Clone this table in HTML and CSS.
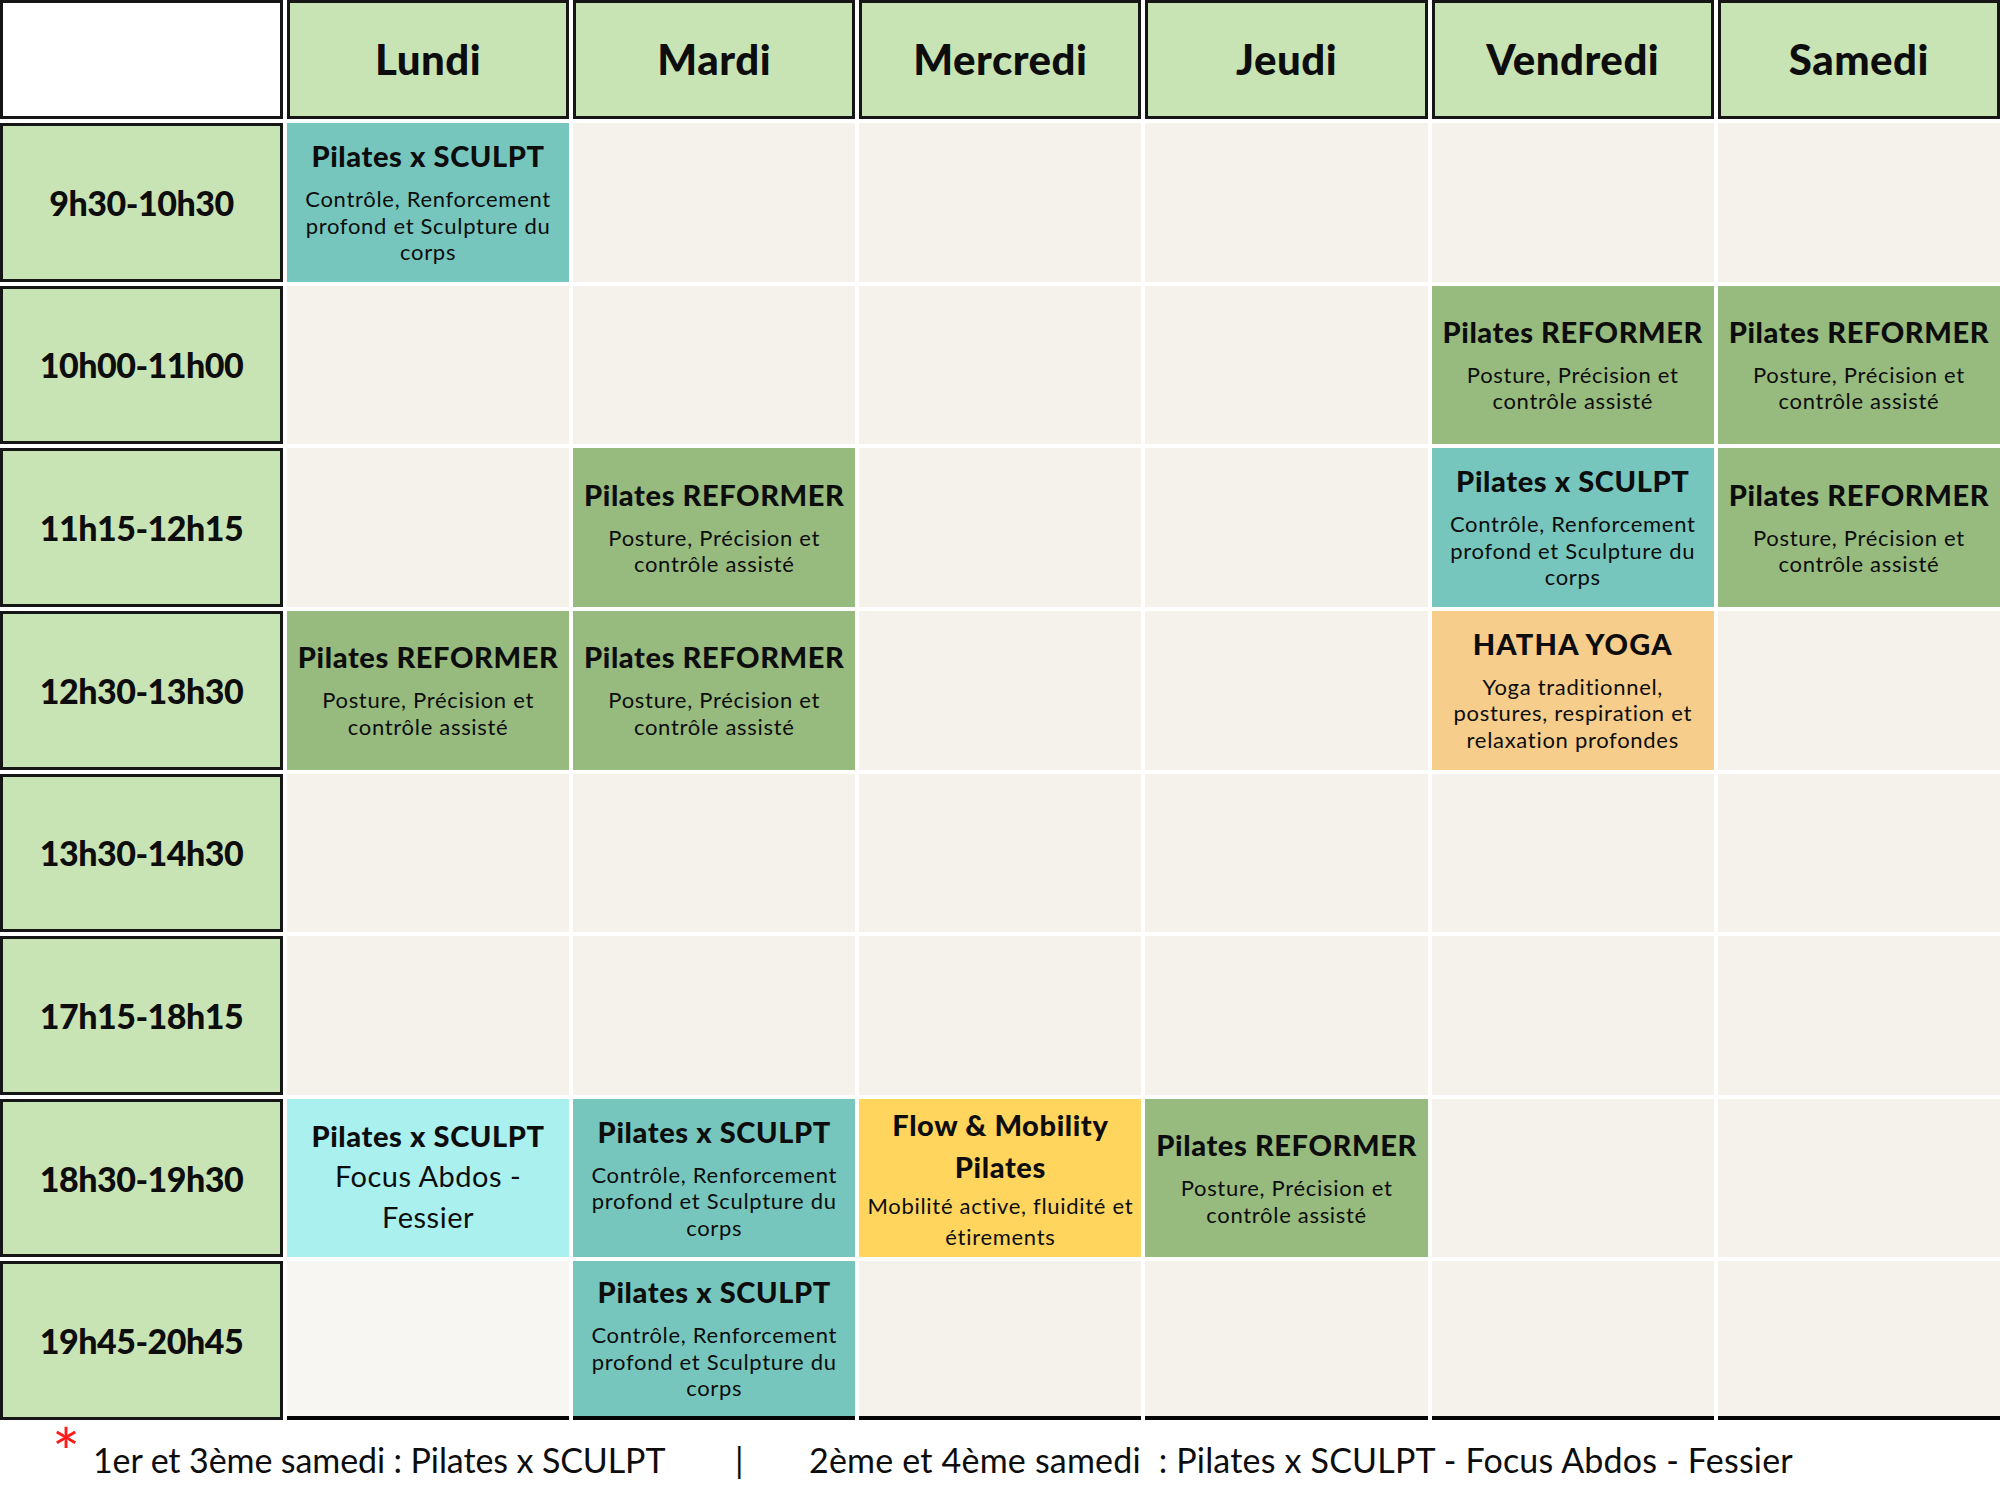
FILE: index.html
```html
<!DOCTYPE html>
<html lang="fr">
<head>
<meta charset="utf-8">
<title>Planning des cours</title>
<link rel="stylesheet" href="styles.css">
</head>
<body>
<div class="schedule">
  <div class="corner"></div>
  <div class="day">Lundi</div>
  <div class="day">Mardi</div>
  <div class="day">Mercredi</div>
  <div class="day">Jeudi</div>
  <div class="day">Vendredi</div>
  <div class="day">Samedi</div>

  <!-- 9h30 -->
  <div class="time">9h30-10h30</div>
  <div class="cell sculpt"><div class="title">Pilates x SCULPT</div><div class="sub">Contrôle, Renforcement<br>profond et Sculpture du<br>corps</div></div>
  <div class="cell"></div>
  <div class="cell"></div>
  <div class="cell"></div>
  <div class="cell"></div>
  <div class="cell"></div>

  <!-- 10h00 -->
  <div class="time">10h00-11h00</div>
  <div class="cell"></div>
  <div class="cell"></div>
  <div class="cell"></div>
  <div class="cell"></div>
  <div class="cell reformer"><div class="title">Pilates REFORMER</div><div class="sub">Posture, Précision et<br>contrôle assisté</div></div>
  <div class="cell reformer"><div class="title">Pilates REFORMER</div><div class="sub">Posture, Précision et<br>contrôle assisté</div></div>

  <!-- 11h15 -->
  <div class="time">11h15-12h15</div>
  <div class="cell"></div>
  <div class="cell reformer"><div class="title">Pilates REFORMER</div><div class="sub">Posture, Précision et<br>contrôle assisté</div></div>
  <div class="cell"></div>
  <div class="cell"></div>
  <div class="cell sculpt"><div class="title">Pilates x SCULPT</div><div class="sub">Contrôle, Renforcement<br>profond et Sculpture du<br>corps</div></div>
  <div class="cell reformer"><div class="title">Pilates REFORMER</div><div class="sub">Posture, Précision et<br>contrôle assisté</div></div>

  <!-- 12h30 -->
  <div class="time">12h30-13h30</div>
  <div class="cell reformer"><div class="title">Pilates REFORMER</div><div class="sub">Posture, Précision et<br>contrôle assisté</div></div>
  <div class="cell reformer"><div class="title">Pilates REFORMER</div><div class="sub">Posture, Précision et<br>contrôle assisté</div></div>
  <div class="cell"></div>
  <div class="cell"></div>
  <div class="cell yoga"><div class="title wide">HATHA YOGA</div><div class="sub">Yoga traditionnel,<br>postures, respiration et<br>relaxation profondes</div></div>
  <div class="cell"></div>

  <!-- 13h30 -->
  <div class="time">13h30-14h30</div>
  <div class="cell"></div>
  <div class="cell"></div>
  <div class="cell"></div>
  <div class="cell"></div>
  <div class="cell"></div>
  <div class="cell"></div>

  <!-- 17h15 -->
  <div class="time">17h15-18h15</div>
  <div class="cell"></div>
  <div class="cell"></div>
  <div class="cell"></div>
  <div class="cell"></div>
  <div class="cell"></div>
  <div class="cell"></div>

  <!-- 18h30 -->
  <div class="time">18h30-19h30</div>
  <div class="cell focus"><div class="title">Pilates x SCULPT</div><div class="sub sub-large">Focus Abdos -<br>Fessier</div></div>
  <div class="cell sculpt"><div class="title">Pilates x SCULPT</div><div class="sub">Contrôle, Renforcement<br>profond et Sculpture du<br>corps</div></div>
  <div class="cell flow"><div class="title title-tall">Flow &amp; Mobility<br>Pilates</div><div class="sub sub-loose">Mobilité active, fluidité et<br>étirements</div></div>
  <div class="cell reformer"><div class="title">Pilates REFORMER</div><div class="sub">Posture, Précision et<br>contrôle assisté</div></div>
  <div class="cell"></div>
  <div class="cell"></div>

  <!-- 19h45 -->
  <div class="time">19h45-20h45</div>
  <div class="cell last light"></div>
  <div class="cell last sculpt"><div class="title">Pilates x SCULPT</div><div class="sub">Contrôle, Renforcement<br>profond et Sculpture du<br>corps</div></div>
  <div class="cell last"></div>
  <div class="cell last"></div>
  <div class="cell last"></div>
  <div class="cell last"></div>
</div>

<div class="footer">
  <span class="star">*</span>
  <span class="note note-first">1er et 3ème samedi : Pilates x SCULPT</span>
  <span class="note sep">|</span>
  <span class="note note-second">2ème et 4ème samedi&nbsp; : Pilates x SCULPT - Focus Abdos - Fessier</span>
</div>
</body>
</html>
```

FILE: styles.css
```css
* { box-sizing: border-box; }

html, body {
  margin: 0;
  padding: 0;
  background: #ffffff;
}

body {
  width: 2000px;
  height: 1500px;
  overflow: hidden;
  font-family: "Lato", "Noto Sans", sans-serif;
  color: #0d0d0d;
}

.schedule {
  display: grid;
  width: 2000px;
  height: 1420px;
  grid-template-columns: 283px repeat(6, 1fr);
  grid-template-rows: 119px repeat(8, 1fr);
  column-gap: 4px;
  row-gap: 4px;
}

.corner {
  background: #ffffff;
  border: 3px solid #161616;
}

.day {
  background: #c8e4b4;
  border: 3px solid #161616;
  display: flex;
  align-items: center;
  justify-content: center;
  font-weight: 900;
  font-size: 42px;
  letter-spacing: 0.5px;
  padding-bottom: 2px;
}

.time {
  background: #c8e4b4;
  border: 3px solid #161616;
  display: flex;
  align-items: center;
  justify-content: center;
  font-weight: 900;
  font-size: 34px;
  letter-spacing: -0.5px;
}

.cell {
  background: #f4f2eb;
  display: flex;
  flex-direction: column;
  align-items: center;
  justify-content: center;
  text-align: center;
  white-space: nowrap;
}

.cell.light { background: #f7f6f2; }
.cell.last { border-bottom: 4px solid #050505; }

.sculpt { background: #76c6be; }
.reformer { background: #97bb7e; }
.focus { background: #aaf0ee; }
.yoga { background: #f6cd8a; }
.flow { background: #ffd55e; }

.title {
  font-weight: 900;
  font-size: 29px;
  line-height: 34px;
  letter-spacing: 0.6px;
}

.title.wide { letter-spacing: 1.2px; }

.title.title-tall { line-height: 42px; }

.sub {
  margin-top: 13px;
  font-size: 22px;
  line-height: 26.5px;
  font-weight: 400;
  letter-spacing: 0.7px;
}

.sub.sub-large {
  margin-top: 2px;
  font-size: 29px;
  line-height: 41.5px;
  letter-spacing: 0.5px;
}

.sub.sub-loose {
  margin-top: 2px;
  line-height: 31px;
}

.footer {
  display: flex;
  align-items: flex-start;
  height: 80px;
  padding-left: 52px;
  font-size: 34px;
  font-weight: 400;
}

.star {
  flex: 0 0 41px;
  color: #ff1a1a;
  font-size: 66px;
  line-height: 60px;
  margin-top: 2px;
}

.note {
  margin-top: 20px;
  line-height: 40px;
}

.note-first { flex: 0 0 642px; letter-spacing: -0.1px; }
.sep { flex: 0 0 74px; }
.note-second { letter-spacing: 0.2px; }
```
